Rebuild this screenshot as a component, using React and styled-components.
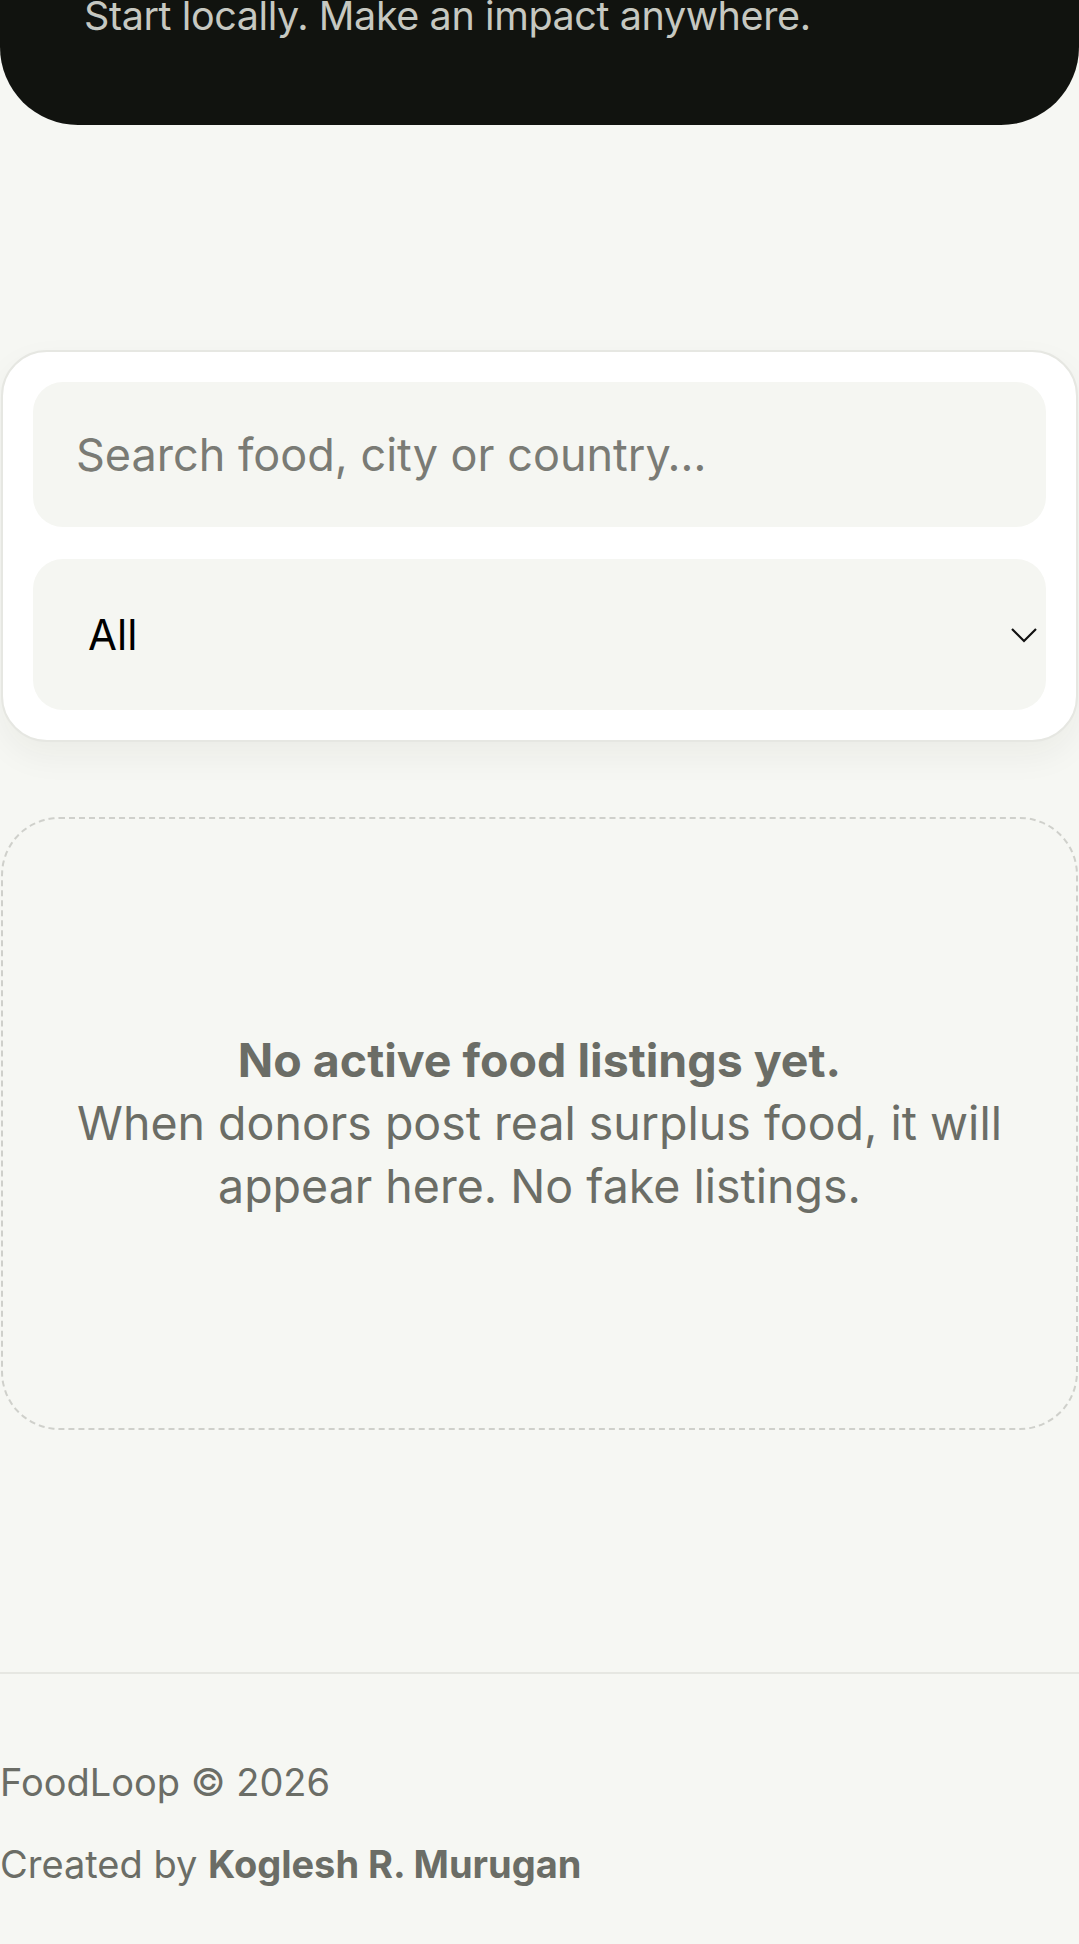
import React from 'react';
import styled, {createGlobalStyle} from 'styled-components';

const GlobalStyle = createGlobalStyle`
  html, body {
    margin: 0;
    padding: 0;
    background: #f6f7f3;
  }
  body {
    font-family: Inter, "Open Sans", "Liberation Sans", sans-serif;
    color: #6b6d66;
  }
  * { box-sizing: border-box; }
`;

const Page = styled.div`
  width: 1079px;
  min-height: 1944px;
  background: #f6f7f3;
  overflow: hidden;
`;

const Hero = styled.header`
  height: 125px;
  background: #11130f;
  border-radius: 0 0 78px 78px;
  padding: 0 84px;
  overflow: hidden;
`;

const Tagline = styled.p`
  margin: -9px 0 0;
  font-size: 39.5px;
  line-height: 50px;
  color: #c6c8c1;
  letter-spacing: -0.4px;
`;

const Main = styled.main`
  display: flex;
  flex-direction: column;
  gap: 75px;
  padding-top: 225px;
`;

const FilterCard = styled.section`
  margin: 0 1px;
  background: #ffffff;
  border: 2px solid #e6e7e2;
  border-radius: 46px;
  padding: 30px;
  display: flex;
  flex-direction: column;
  gap: 32px;
  box-shadow: 0 14px 34px rgba(30, 32, 25, 0.05);
`;

const SearchInput = styled.input`
  height: 145px;
  border: none;
  outline: none;
  border-radius: 30px;
  background: #f5f6f2;
  padding: 0 43px;
  font-family: inherit;
  font-size: 45px;
  color: #1b1c18;
  &::placeholder {
    color: #7a7b75;
  }
`;

const SelectWrap = styled.div`
  position: relative;
  height: 151px;
  border-radius: 30px;
  background: #f5f6f2;
`;

const Select = styled.select`
  appearance: none;
  width: 100%;
  height: 100%;
  border: none;
  outline: none;
  background: transparent;
  padding: 0 55px;
  font-family: inherit;
  font-size: 42px;
  color: #000;
`;

const Chevron = styled.svg`
  position: absolute;
  right: 8px;
  top: 50%;
  transform: translateY(-50%);
  pointer-events: none;
`;

const EmptyState = styled.section`
  margin: 0 1px;
  height: 613px;
  border: 2px dashed #cfd0cb;
  border-radius: 58px;
  display: flex;
  align-items: center;
  justify-content: center;
  padding: 0 50px;
  text-align: center;
`;

const EmptyText = styled.p`
  margin: 0;
  font-size: 46.5px;
  line-height: 63px;
  color: #6b6d66;
  strong {
    font-weight: 700;
  }
`;

const Footer = styled.footer`
  margin-top: 242px;
  border-top: 2px solid #e6e7e2;
  padding-top: 85px;
  display: flex;
  flex-direction: column;
  gap: 36px;
`;

const FooterLine = styled.p`
  margin: 0;
  font-size: 38px;
  line-height: 46px;
  color: #6b6d66;
  strong {
    font-weight: 700;
  }
`;

export default function App() {
  return (
    <Page>
      <GlobalStyle />
      <Hero>
        <Tagline>Start locally. Make an impact anywhere.</Tagline>
      </Hero>
      <Main>
        <FilterCard>
          <SearchInput placeholder="Search food, city or country…" />
          <SelectWrap>
            <Select defaultValue="all">
              <option value="all">All</option>
            </Select>
            <Chevron width="28" height="16" viewBox="0 0 28 16" fill="none">
              <path d="M2 2 L14 14 L26 2" stroke="#111" strokeWidth="2.2" />
            </Chevron>
          </SelectWrap>
        </FilterCard>
        <EmptyState>
          <EmptyText>
            <strong>No active food listings yet.</strong>
            <br />
            When donors post real surplus food, it will appear here. No fake listings.
          </EmptyText>
        </EmptyState>
      </Main>
      <Footer>
        <FooterLine>FoodLoop © 2026</FooterLine>
        <FooterLine>
          Created by <strong>Koglesh R. Murugan</strong>
        </FooterLine>
      </Footer>
    </Page>
  );
}
